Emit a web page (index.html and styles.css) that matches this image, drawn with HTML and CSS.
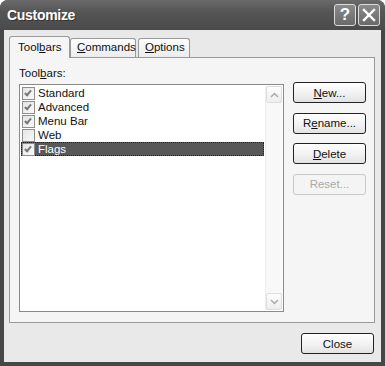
FILE: index.html
```html
<!DOCTYPE html>
<html lang="en">

<head>
  <meta charset="UTF-8">
  <title>Customize</title>
  <link rel="stylesheet" href="styles.css">
</head>

<body>
  <div class="window">
    <header class="titlebar">
      <h1 class="title">Customize</h1>
      <div class="caption-btns">
        <span class="caption-btn">?</span>
        <span class="caption-btn">
          <svg width="14" height="14" viewBox="0 0 14 14"><path d="M2 2 L12 12 M12 2 L2 12" stroke="#fff" stroke-width="2.4" stroke-linecap="square"/></svg>
        </span>
      </div>
    </header>
    <main class="client">
      <nav class="tabs">
        <span class="tab tab-active">Tool<u>b</u>ars</span>
        <span class="tab"><u>C</u>ommands</span>
        <span class="tab"><u>O</u>ptions</span>
      </nav>
      <section class="panel">
        <div class="list-col">
          <label class="list-label">Tool<u>b</u>ars:</label>
          <div class="listbox">
            <ul class="items">
              <li class="item"><span class="check on"></span>Standard</li>
              <li class="item"><span class="check on"></span>Advanced</li>
              <li class="item"><span class="check on"></span>Menu Bar</li>
              <li class="item"><span class="check"></span>Web</li>
              <li class="item selected"><span class="check on"></span><span class="sel-text">Flags</span></li>
            </ul>
            <div class="scrollbar">
              <span class="arrow"><svg width="9" height="6" viewBox="0 0 9 6"><path d="M1 5 L4.5 1.5 L8 5" fill="none" stroke="#aaa" stroke-width="1.5"/></svg></span>
              <span class="arrow"><svg width="9" height="6" viewBox="0 0 9 6"><path d="M1 1 L4.5 4.5 L8 1" fill="none" stroke="#aaa" stroke-width="1.5"/></svg></span>
            </div>
          </div>
        </div>
        <div class="btn-col">
          <button class="btn"><u>N</u>ew...</button>
          <button class="btn">R<u>e</u>name...</button>
          <button class="btn"><u>D</u>elete</button>
          <button class="btn" disabled>Reset...</button>
        </div>
      </section>
      <footer class="footer">
        <button class="btn">Close</button>
      </footer>
    </main>
  </div>
</body>

</html>
```

FILE: styles.css
```css
html {
  box-sizing: border-box;
  font-family: 'Liberation Sans', Arial, sans-serif;
  font-size: 11.5px;
}

*,
*:after,
*:before {
  box-sizing: inherit;
}

body {
  margin: 0;
  background-color: #fff;
}

u {
  text-decoration-thickness: 1px;
  text-underline-offset: 1px;
}

.window {
  width: 385px;
  height: 366px;
  display: flex;
  flex-direction: column;
  background-color: #474747;
  border-radius: 8px 8px 0 0;
  padding: 0 4px 4px;
}

.titlebar {
  height: 30px;
  display: flex;
  align-items: center;
  justify-content: space-between;
  margin: 0 -4px;
  padding: 0 5px 1px 7px;
  border-radius: 8px 8px 0 0;
  background: linear-gradient(#6a6a6a, #555 40%, #4a4a4a);
}

.title {
  margin: 0;
  color: #fff;
  font-size: 14px;
  font-weight: bold;
  letter-spacing: -.3px;
  text-shadow: 1px 1px 0 #333;
}

.caption-btns {
  display: flex;
  gap: 2px;
}

.caption-btn {
  width: 22px;
  height: 22px;
  display: flex;
  align-items: center;
  justify-content: center;
  border: 1px solid #ddd;
  border-radius: 3px;
  background: linear-gradient(#8a8a8a, #6a6a6a);
  color: #fff;
  font-size: 17px;
  font-weight: bold;
}

.client {
  flex: 1;
  display: flex;
  flex-direction: column;
  background-color: #e9e9e9;
  padding: 6px 6px 0 5px;
}

.tabs {
  display: flex;
  align-items: flex-end;
  height: 21px;
}

.tab {
  height: 19px;
  margin-right: 2px;
  padding: 2px 6px 0;
  border: 1px solid #999;
  border-bottom: none;
  border-radius: 3px 3px 0 0;
  background: linear-gradient(#fdfdfd, #ececec);
  color: #111;
}

.tab-active {
  width: 61px;
  height: 22px;
  margin-right: 0;
  margin-bottom: -1px;
  padding: 4px 8px 0 8px;
  background: #f5f5f5;
  position: relative;
  z-index: 1;
}

.tab:nth-child(2) {
  width: 66px;
}

.tab:nth-child(3) {
  width: 52px;
}

.panel {
  height: 266px;
  display: flex;
  gap: 9px;
  border: 1px solid #999;
  background-color: #f5f5f5;
  padding: 8px 8px 0 9px;
}

.list-col {
  display: flex;
  flex-direction: column;
}

.list-label {
  color: #111;
  height: 18px;
  padding-top: 1px;
}

.listbox {
  width: 265px;
  height: 228px;
  display: flex;
  border: 1px solid #8a8a8a;
  background-color: #fff;
  padding: 1px;
}

.items {
  flex: 1;
  margin: 0;
  padding: 0;
  list-style: none;
}

.item {
  height: 14px;
  display: flex;
  align-items: center;
  line-height: 14px;
  color: #111;
}

.check {
  width: 13px;
  height: 13px;
  margin: 0 3px 0 1px;
  border: 1px solid #8e8e8e;
  background: linear-gradient(135deg, #e4e4e4, #fafafa);
  position: relative;
}

.check.on:after {
  content: "";
  position: absolute;
  left: 3px;
  top: 1px;
  width: 4px;
  height: 7px;
  border: solid #777;
  border-width: 0 2px 2px 0;
  transform: rotate(40deg);
}

.selected {
  background-color: #585858;
  margin-right: 1px;
  outline: 1px dotted #222;
  outline-offset: -1px;
}

.sel-text {
  color: #fff;
}

.scrollbar {
  width: 17px;
  display: flex;
  flex-direction: column;
  justify-content: space-between;
  background-color: #f8f8f8;
  border-left: 1px solid #eee;
}

.arrow {
  height: 17px;
  display: flex;
  align-items: center;
  justify-content: center;
  border: 1px solid #ddd;
  border-radius: 2px;
  background: linear-gradient(#fdfdfd, #eee);
}

.btn-col {
  display: flex;
  flex-direction: column;
  gap: 9.5px;
  padding-top: 16px;
}

.btn {
  width: 73px;
  height: 21px;
  padding: 0;
  border: 1px solid #222;
  border-radius: 3px;
  background: linear-gradient(#fff, #f0f0f0 60%, #e2e2e2);
  font-family: inherit;
  font-size: 11.5px;
  color: #111;
}

.btn:disabled {
  border-color: #c8c8c8;
  color: #aaa;
  background: #f4f4f4;
}

.footer {
  display: flex;
  justify-content: flex-end;
  padding: 10px 1px 0 0;
}
```
